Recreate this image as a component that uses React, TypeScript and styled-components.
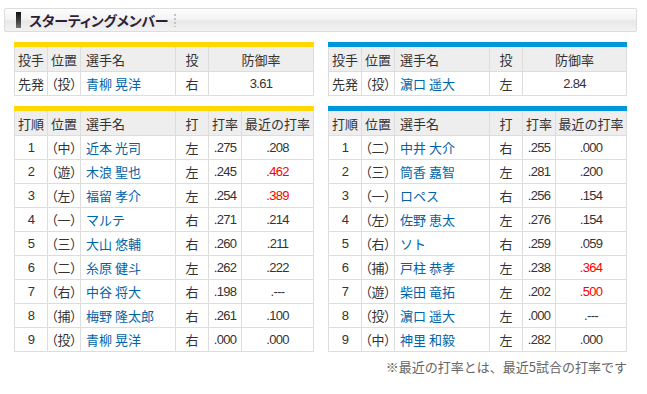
import React from 'react'
import styled, { createGlobalStyle } from 'styled-components'

type Batter = {
    order: number
    pos: string
    name: string
    hand: string
    avg: string
    recent: string
    hot?: boolean
}

type Team = {
    color: string
    pitcher: { name: string, hand: string, era: string }
    batters: Batter[]
}

const teams: Team[] = [
    {
        color: '#ffd800',
        pitcher: { name: '青柳 晃洋', hand: '右', era: '3.61' },
        batters: [
            { order: 1, pos: '中', name: '近本 光司', hand: '左', avg: '.275', recent: '.208' },
            { order: 2, pos: '遊', name: '木浪 聖也', hand: '左', avg: '.245', recent: '.462', hot: true },
            { order: 3, pos: '左', name: '福留 孝介', hand: '左', avg: '.254', recent: '.389', hot: true },
            { order: 4, pos: '一', name: 'マルテ', hand: '右', avg: '.271', recent: '.214' },
            { order: 5, pos: '三', name: '大山 悠輔', hand: '右', avg: '.260', recent: '.211' },
            { order: 6, pos: '二', name: '糸原 健斗', hand: '左', avg: '.262', recent: '.222' },
            { order: 7, pos: '右', name: '中谷 将大', hand: '右', avg: '.198', recent: '.---' },
            { order: 8, pos: '捕', name: '梅野 隆太郎', hand: '右', avg: '.261', recent: '.100' },
            { order: 9, pos: '投', name: '青柳 晃洋', hand: '右', avg: '.000', recent: '.000' },
        ],
    },
    {
        color: '#0096dc',
        pitcher: { name: '濵口 遥大', hand: '左', era: '2.84' },
        batters: [
            { order: 1, pos: '二', name: '中井 大介', hand: '右', avg: '.255', recent: '.000' },
            { order: 2, pos: '三', name: '筒香 嘉智', hand: '左', avg: '.281', recent: '.200' },
            { order: 3, pos: '一', name: 'ロペス', hand: '右', avg: '.256', recent: '.154' },
            { order: 4, pos: '左', name: '佐野 恵太', hand: '左', avg: '.276', recent: '.154' },
            { order: 5, pos: '右', name: 'ソト', hand: '右', avg: '.259', recent: '.059' },
            { order: 6, pos: '捕', name: '戸柱 恭孝', hand: '左', avg: '.238', recent: '.364', hot: true },
            { order: 7, pos: '遊', name: '柴田 竜拓', hand: '左', avg: '.202', recent: '.500', hot: true },
            { order: 8, pos: '投', name: '濵口 遥大', hand: '左', avg: '.000', recent: '.---' },
            { order: 9, pos: '中', name: '神里 和毅', hand: '左', avg: '.282', recent: '.000' },
        ],
    },
]

const GlobalStyle = createGlobalStyle`
    body {
        margin: 0;
        background: #fff;
        font-family: "Liberation Sans", "Noto Sans CJK JP", sans-serif;
        font-size: 13px;
        color: #333;
    }
`

const App = () => {
    return (
        <Page>
            <GlobalStyle />
            <TitleBar>
                <TitleMark />
                <Title>スターティングメンバー</Title>
                <TitleDots />
            </TitleBar>
            <Content>
                <Columns>
                    {teams.map((team, i) => (
                        <Lineup key={i} $last={i === 1}>
                            <Table $color={team.color}>
                                <colgroup>
                                    <col style={{ width: 33 }} />
                                    <col style={{ width: 33 }} />
                                    <col style={{ width: 95 }} />
                                    <col style={{ width: 33 }} />
                                    <col />
                                </colgroup>
                                <thead>
                                    <tr>
                                        <Th>投手</Th>
                                        <Th>位置</Th>
                                        <Th $left>選手名</Th>
                                        <Th>投</Th>
                                        <Th>防御率</Th>
                                    </tr>
                                </thead>
                                <tbody>
                                    <tr>
                                        <Td>先発</Td>
                                        <Td $palt>（投）</Td>
                                        <Td $left><Name>{team.pitcher.name}</Name></Td>
                                        <Td>{team.pitcher.hand}</Td>
                                        <Td $num>{team.pitcher.era}</Td>
                                    </tr>
                                </tbody>
                            </Table>
                            <Table $color={team.color}>
                                <colgroup>
                                    <col style={{ width: 33 }} />
                                    <col style={{ width: 33 }} />
                                    <col style={{ width: 95 }} />
                                    <col style={{ width: 33 }} />
                                    <col style={{ width: 33 }} />
                                    <col />
                                </colgroup>
                                <thead>
                                    <tr>
                                        <Th>打順</Th>
                                        <Th>位置</Th>
                                        <Th $left>選手名</Th>
                                        <Th>打</Th>
                                        <Th>打率</Th>
                                        <Th>最近の打率</Th>
                                    </tr>
                                </thead>
                                <tbody>
                                    {team.batters.map(b => (
                                        <tr key={b.order}>
                                            <Td $num>{b.order}</Td>
                                            <Td $palt>（{b.pos}）</Td>
                                            <Td $left><Name>{b.name}</Name></Td>
                                            <Td>{b.hand}</Td>
                                            <Td $num>{b.avg}</Td>
                                            <Td $num $hot={b.hot}>{b.recent}</Td>
                                        </tr>
                                    ))}
                                </tbody>
                            </Table>
                        </Lineup>
                    ))}
                </Columns>
                <Note>※最近の打率とは、最近5試合の打率です</Note>
            </Content>
        </Page>
    )
}

export default App

const Page = styled.div`
    width: 633px;
    padding: 8px 0 0 4px;
`

const TitleBar = styled.div`
    display: flex;
    align-items: center;
    height: 22px;
    border: 1px solid #dcdcdc;
    border-radius: 2px;
    background: linear-gradient(to bottom, #fdfdfd 0%, #f4f4f4 45%, #e8e8e8 55%, #f2f2f2 100%);
    padding-left: 11px;
`

const TitleMark = styled.span`
    width: 5px;
    height: 16px;
    background: linear-gradient(to bottom, #111 0%, #444 60%, #777 100%);
`

const Title = styled.h2`
    margin: 0 0 0 8px;
    font-family: "Noto Sans CJK JP", sans-serif;
    font-size: 14px;
    font-weight: 700;
    line-height: 1;
    color: #2e1f38;
    font-feature-settings: "palt";
    letter-spacing: -0.2px;
`

const TitleDots = styled.span`
    width: 2px;
    height: 13px;
    margin-left: 6px;
    background: repeating-linear-gradient(to bottom, #c4c4c4 0 2px, transparent 2px 4px);
`

const Content = styled.div`
    padding: 10px 10px 0;
`

const Columns = styled.div`
    display: flex;
    gap: 14px;
`

const Lineup = styled.div<{ $last?: boolean }>`
    display: flex;
    flex-direction: column;
    gap: 10px;
    width: ${({ $last }) => $last ? '299px' : '300px'};
`

const Table = styled.table<{ $color: string }>`
    width: 100%;
    table-layout: fixed;
    border-collapse: collapse;
    border-top: 5px solid ${({ $color }) => $color};
`

const Th = styled.th<{ $left?: boolean }>`
    height: 24px;
    padding: 0 ${({ $left }) => $left ? '5px' : '0'};
    border: 1px solid #dddddd;
    border-top: 0;
    background: #eeeeee;
    font-family: "Noto Sans CJK JP", sans-serif;
    font-weight: 400;
    font-size: 13px;
    color: #333;
    text-align: ${({ $left }) => $left ? 'left' : 'center'};
    white-space: nowrap;
    overflow: hidden;
`

const Td = styled.td<{ $left?: boolean, $num?: boolean, $palt?: boolean, $hot?: boolean }>`
    height: 23px;
    padding: 0 ${({ $left }) => $left ? '5px' : '0'};
    border: 1px solid #dddddd;
    background: #fff;
    font-family: ${({ $num }) => $num ? '"Liberation Sans", sans-serif' : '"Noto Sans CJK JP", sans-serif'};
    font-size: 13px;
    letter-spacing: ${({ $num }) => $num ? '-0.7px' : '0'};
    font-feature-settings: ${({ $palt }) => $palt ? '"palt"' : 'normal'};
    color: ${({ $hot }) => $hot ? '#ff0000' : '#333'};
    text-align: ${({ $left }) => $left ? 'left' : 'center'};
    white-space: nowrap;
    overflow: hidden;
`

const Name = styled.span`
    color: #0064a8;
`

const Note = styled.p`
    margin: 6px 0 0;
    text-align: right;
    font-family: "Noto Sans CJK JP", sans-serif;
    font-size: 13px;
    line-height: 18px;
    color: #666;
`
